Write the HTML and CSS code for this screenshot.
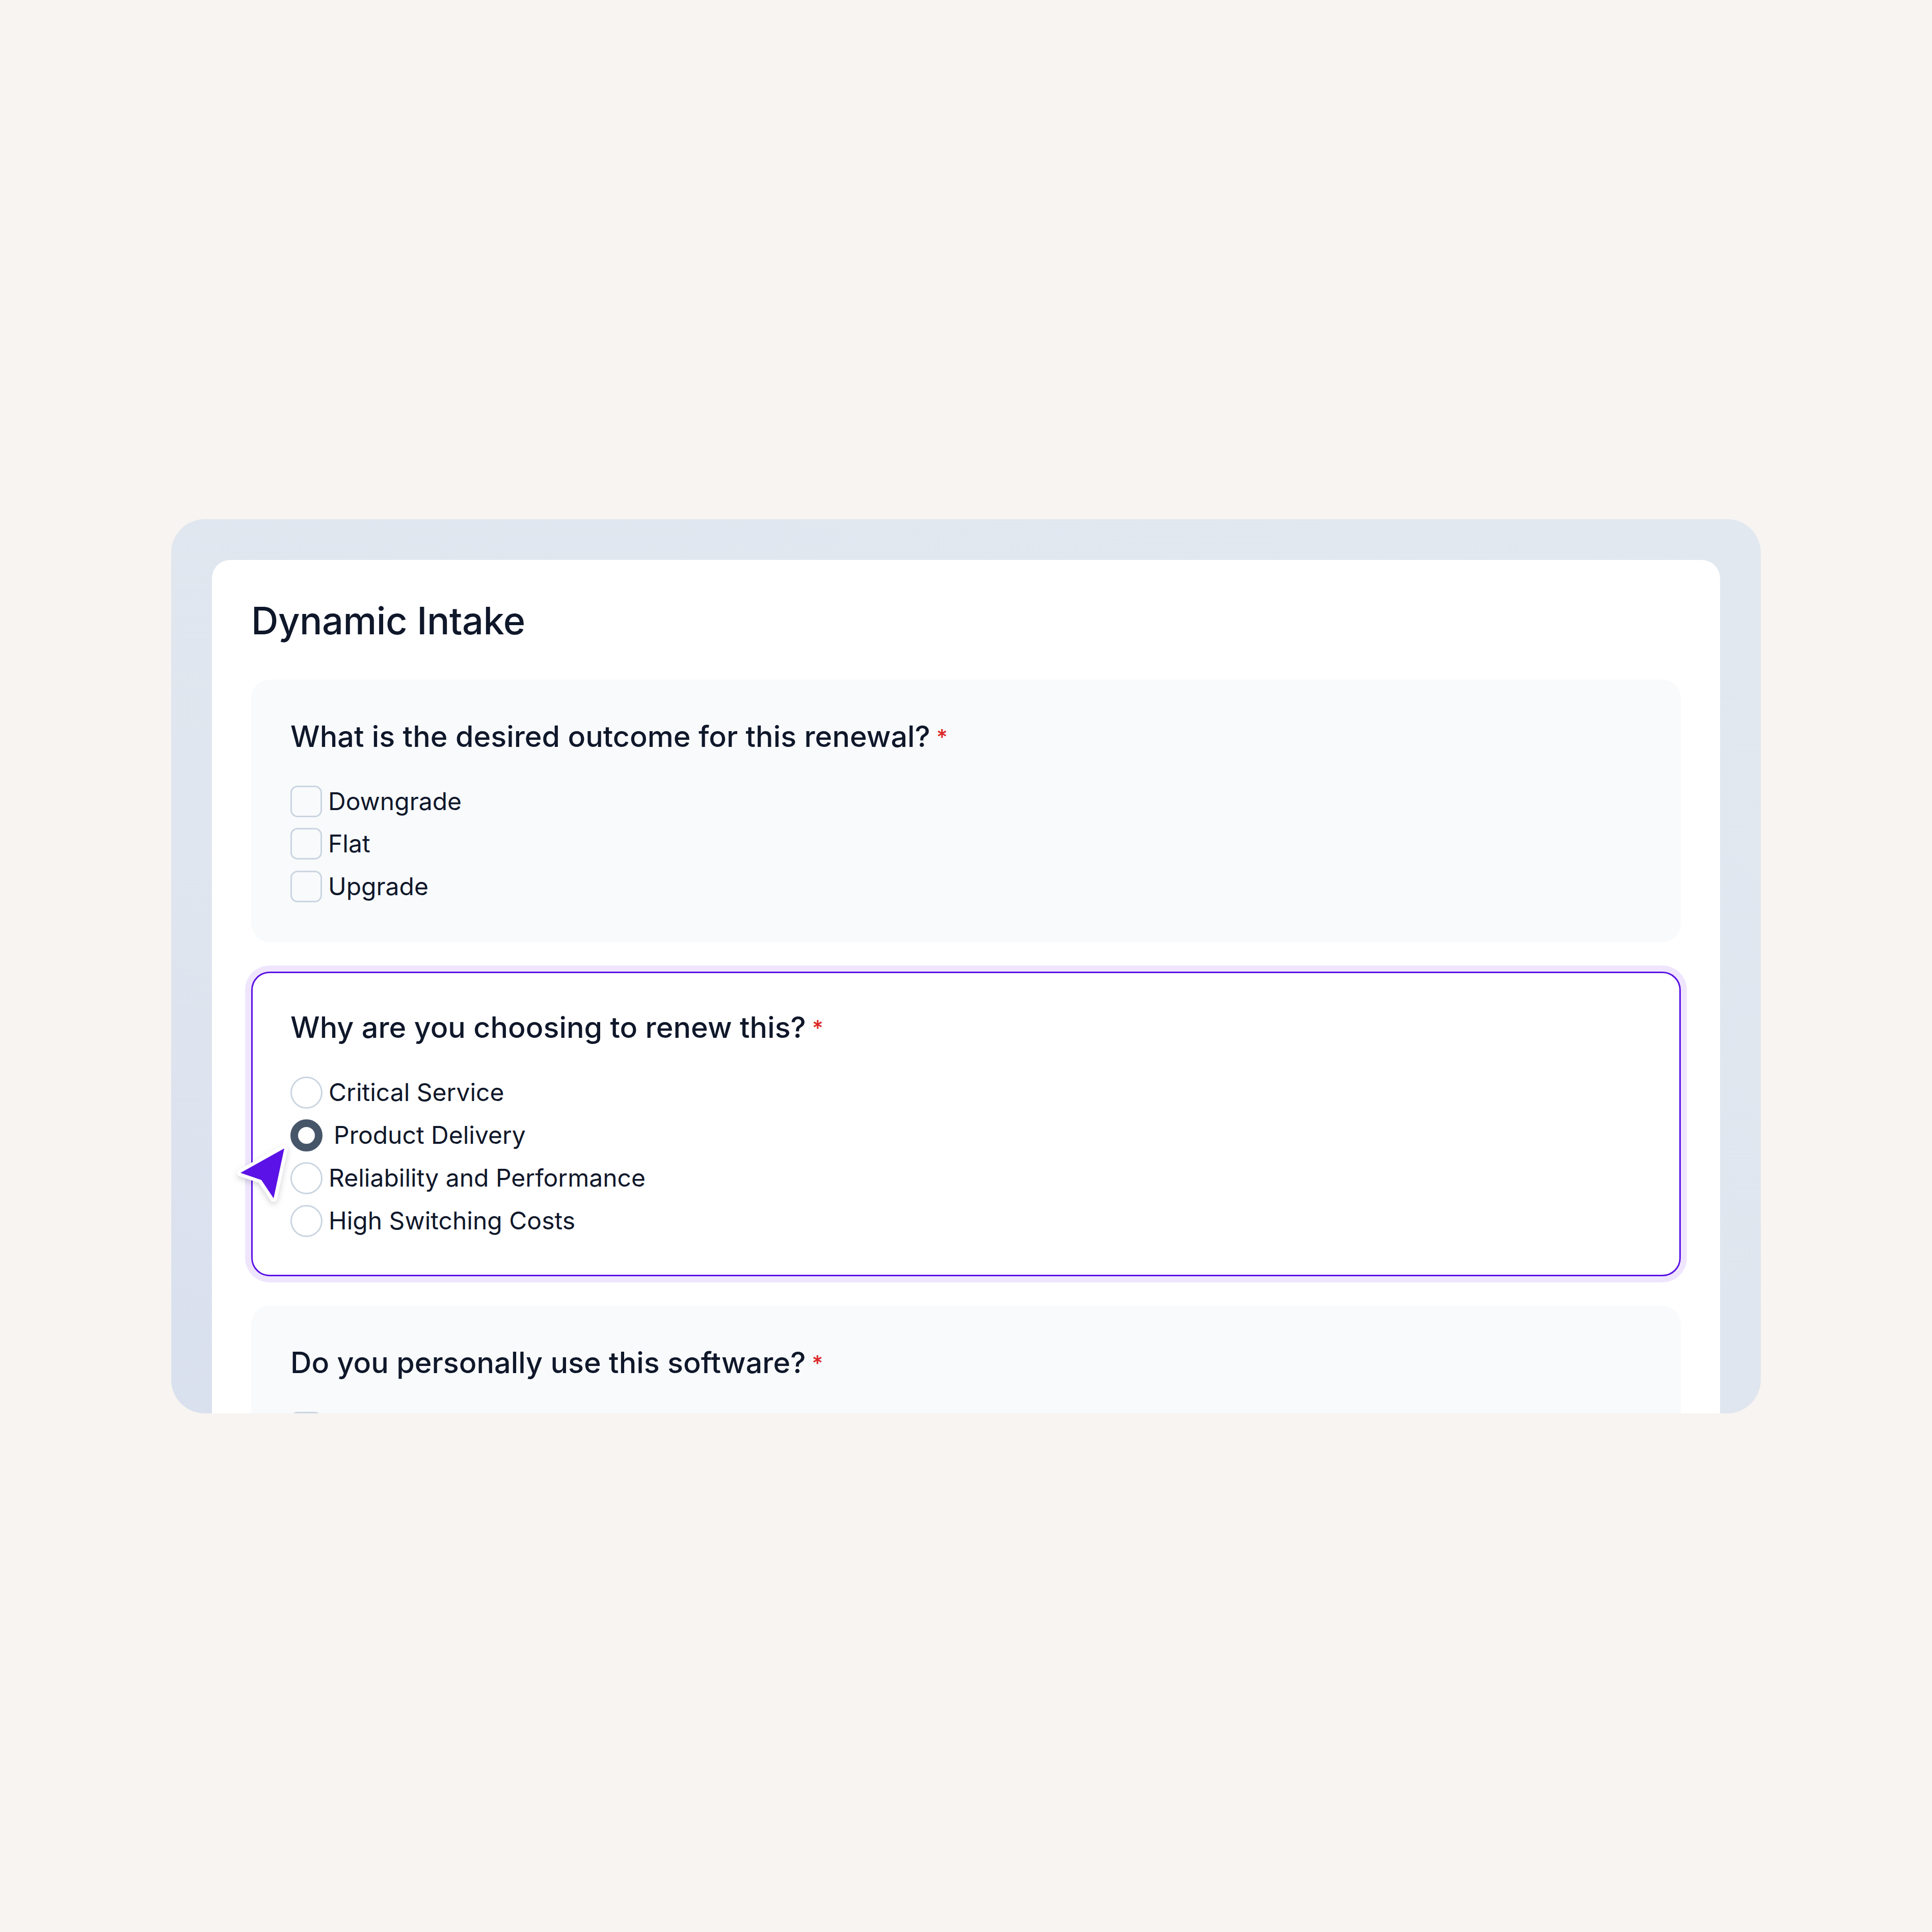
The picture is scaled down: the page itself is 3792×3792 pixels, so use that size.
FILE: index.html
```html
<!DOCTYPE html>
<html lang="en">
<head>
<meta charset="utf-8">
<title>Dynamic Intake</title>
<link rel="stylesheet" href="styles.css">
</head>
<body>
<div class="frame">
  <div class="card">
    <h1 class="title">Dynamic Intake</h1>
    <div class="sections">
      <div class="section">
        <h2 class="question">What is the desired outcome for this renewal?<span class="req">*</span></h2>
        <div class="options">
          <label class="option"><span class="box"></span><span class="label">Downgrade</span></label>
          <label class="option"><span class="box"></span><span class="label">Flat</span></label>
          <label class="option"><span class="box"></span><span class="label">Upgrade</span></label>
        </div>
      </div>
      <div class="section active">
        <h2 class="question">Why are you choosing to renew this?<span class="req">*</span></h2>
        <div class="options radios">
          <label class="option"><span class="radio"></span><span class="label">Critical Service</span></label>
          <label class="option selected"><span class="radio on"></span><span class="label">Product Delivery</span></label>
          <label class="option"><span class="radio"></span><span class="label">Reliability and Performance</span></label>
          <label class="option"><span class="radio"></span><span class="label">High Switching Costs</span></label>
        </div>
        <svg class="cursor" width="110" height="125" viewBox="0 0 110 125" xmlns="http://www.w3.org/2000/svg">
          <polygon points="98,11 12,59 53,73 77,109" fill="#5b12e6" stroke="#ffffff" stroke-width="14" stroke-linejoin="round" paint-order="stroke"/>
        </svg>
      </div>
      <div class="section">
        <h2 class="question">Do you personally use this software?<span class="req">*</span></h2>
        <div class="options">
          <span class="box"></span>
          <span class="box"></span>
        </div>
      </div>
    </div>
  </div>
</div>
</body>
</html>
```

FILE: styles.css
```css
html, body {
  margin: 0;
  padding: 0;
}
body {
  width: 3792px;
  height: 3792px;
  background: #f7f4f1;
  display: flex;
  align-items: center;
  justify-content: center;
  font-family: Inter, "Noto Sans", sans-serif;
  color: #0f172a;
}
.frame {
  box-sizing: border-box;
  width: 3120px;
  height: 1755px;
  border-radius: 66px;
  background: linear-gradient(200deg, #e2e8f0 0%, #e0e6ef 60%, #d9e0ee 100%);
  padding: 80px 80px 0;
  overflow: hidden;
}
.card {
  background: #ffffff;
  border-radius: 36px;
  padding: 75px 77px 77px;
}
.title {
  margin: 0 0 72px;
  font-size: 74px;
  line-height: 88px;
  font-weight: 500;
  letter-spacing: -0.5px;
}
.sections {
  display: flex;
  flex-direction: column;
  gap: 58px;
}
.section {
  position: relative;
  background: #f8fafc;
  border-radius: 36px;
  padding: 77px 77px 78px;
}
.section.active {
  background: #ffffff;
  border: 3px solid #5b12e6;
  box-shadow: 0 0 0 12px #efe6fd;
  padding: 72px 74px 74px;
}
.question {
  margin: 0 0 57px;
  font-size: 57.5px;
  line-height: 68px;
  font-weight: 500;
}
.req {
  color: #dc2626;
  font-size: 42px;
  margin-left: 12px;
  position: relative;
  top: -4px;
}
.options {
  display: flex;
  flex-direction: column;
  align-items: flex-start;
  gap: 21.5px;
}
.options.radios {
  gap: 21px;
}
.option {
  display: flex;
  align-items: center;
  gap: 12px;
  font-size: 48px;
  line-height: 62px;
}
.box {
  box-sizing: border-box;
  width: 62px;
  height: 62px;
  border: 3px solid #cbd5e1;
  border-radius: 14px;
  flex: none;
}
.radio {
  box-sizing: border-box;
  width: 63px;
  height: 63px;
  border: 3px solid #cbd5e1;
  border-radius: 50%;
  background: #ffffff;
  flex: none;
}
.radio.on {
  border: 15px solid #475569;
}
.option.selected .label {
  margin-left: 10px;
}
.cursor {
  position: absolute;
  left: -36px;
  top: 333px;
  overflow: visible;
  filter: drop-shadow(0 5px 6px rgba(15, 23, 42, 0.18));
}
```
